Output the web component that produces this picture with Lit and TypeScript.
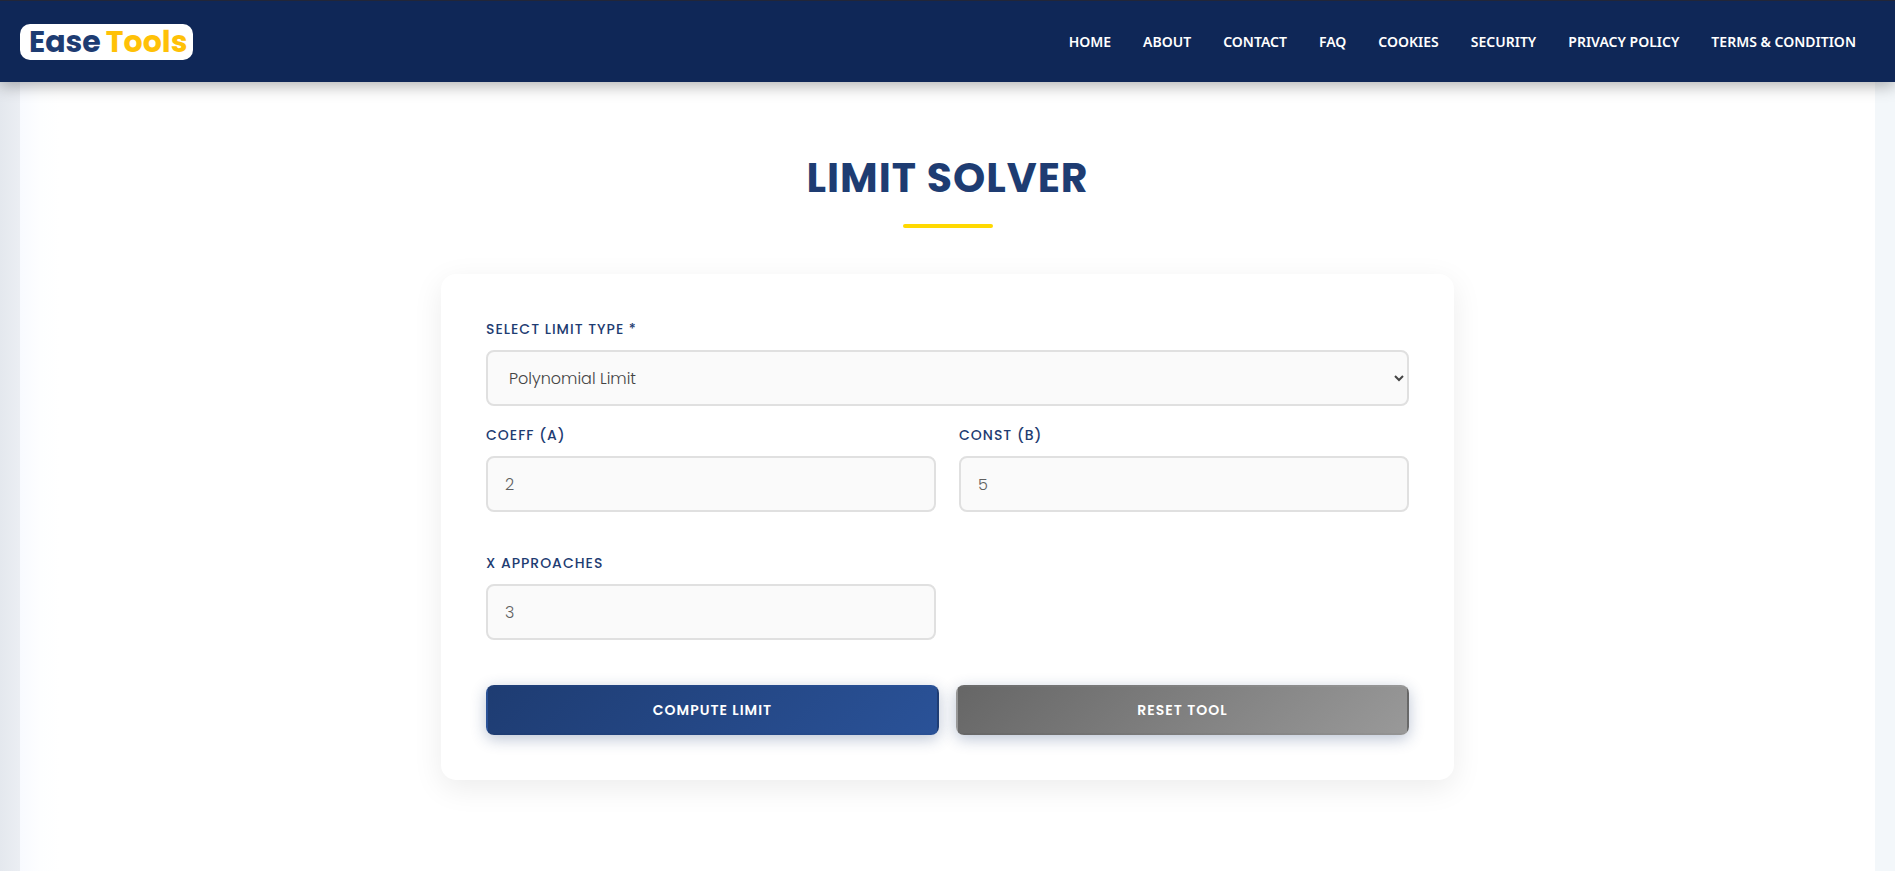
import { LitElement, html, css } from "lit";
import { customElement, state } from "lit/decorators.js";

const NAV_LINKS = [
  "Home",
  "About",
  "Contact",
  "FAQ",
  "Cookies",
  "Security",
  "Privacy Policy",
  "Terms & Condition",
];

@customElement("site-header")
class SiteHeader extends LitElement {
  static styles = css`
    :host {
      display: block;
      position: relative;
      z-index: 1;
    }
    .bar {
      display: flex;
      align-items: center;
      justify-content: space-between;
      box-sizing: border-box;
      min-height: 82px;
      padding: 1px 39px 0 20px;
      background: #0f2757;
      box-shadow: inset 0 1px #222638, 0 4px 15px rgba(0, 0, 0, 0.3);
    }
    .logo {
      display: flex;
      align-items: center;
      gap: 5px;
      padding: 0 6px 0 9px;
      border-radius: 10px;
      background: #fff;
      color: #1e3c72;
      font: 700 30px/36px Poppins, Inter, sans-serif;
      text-decoration: none;
    }
    .accent {
      color: #ffc107;
    }
    .links {
      display: flex;
      gap: 32px;
    }
    .link {
      color: #fff;
      font: 600 14px/24px "Segoe UI", "Noto Sans", sans-serif;
      text-decoration: none;
      text-transform: uppercase;
      white-space: nowrap;
    }
  `;

  render() {
    return html`
      <header class="bar">
        <a class="logo" href="#"><span>Ease</span><span class="accent">Tools</span></a>
        <nav class="links">
          ${NAV_LINKS.map((name) => html`<a class="link" href="#">${name}</a>`)}
        </nav>
      </header>
    `;
  }
}

@customElement("limit-form")
class LimitForm extends LitElement {
  @state() private kind = "polynomial";

  static styles = css`
    :host {
      display: block;
      font-family: Poppins, Inter, sans-serif;
    }
    .card {
      display: flex;
      flex-direction: column;
      padding: 45px;
      border-radius: 15px;
      background: #fff;
      box-shadow: 0 8px 30px rgba(0, 0, 0, 0.08);
    }
    .field {
      display: flex;
      flex-direction: column;
      gap: 10px;
      min-width: 0;
    }
    .label {
      color: #1e3c72;
      font-size: 14px;
      font-weight: 500;
      line-height: 21px;
      letter-spacing: 1px;
      text-transform: uppercase;
    }
    .control {
      box-sizing: border-box;
      width: 100%;
      height: 56px;
      padding: 0 17px;
      border: 2px solid #e0e0e0;
      border-radius: 8px;
      background: #fafafa;
      color: #444;
      font: 300 16px/24px Poppins, Inter, sans-serif;
    }
    .control::placeholder {
      color: #606060;
    }
    .grid {
      display: grid;
      grid-template-columns: 1fr 1fr;
      gap: 41px 23px;
      margin-top: 19px;
    }
    .actions {
      display: grid;
      grid-template-columns: 1fr 1fr;
      gap: 17px;
      margin-top: 45px;
    }
    .button {
      height: 50px;
      border: 2px solid transparent;
      border-radius: 8px;
      background: linear-gradient(135deg, #1e3c72, #2a5298);
      box-shadow: 0 4px 15px rgba(30, 60, 114, 0.3);
      color: #fff;
      font: 600 14px/20px Poppins, Inter, sans-serif;
      letter-spacing: 1px;
      text-transform: uppercase;
      cursor: pointer;
    }
    .muted {
      background: linear-gradient(135deg, #666, #999);
    }
  `;

  render() {
    return html`
      <form class="card" @submit=${(e: Event) => e.preventDefault()}>
        <div class="field">
          <label class="label" for="kind">Select Limit Type *</label>
          <select
            class="control"
            id="kind"
            .value=${this.kind}
            @change=${(e: Event) => (this.kind = (e.target as HTMLSelectElement).value)}
          >
            <option value="polynomial">Polynomial Limit</option>
          </select>
        </div>
        <div class="grid">
          <div class="field">
            <label class="label" for="coeff">Coeff (a)</label>
            <input class="control" id="coeff" type="number" placeholder="2" />
          </div>
          <div class="field">
            <label class="label" for="const">Const (b)</label>
            <input class="control" id="const" type="number" placeholder="5" />
          </div>
          <div class="field">
            <label class="label" for="approach">x approaches</label>
            <input class="control" id="approach" type="number" placeholder="3" />
          </div>
        </div>
        <div class="actions">
          <button class="button" type="submit">Compute Limit</button>
          <button class="button muted" type="reset">Reset Tool</button>
        </div>
      </form>
    `;
  }
}

@customElement("app-root")
class AppRoot extends LitElement {
  static styles = css`
    :host {
      display: flex;
      flex-direction: column;
      min-height: 100vh;
      background: linear-gradient(90deg, #e4e8ee, #ebeef3 20px, #f3f7fa 50%);
    }
    .page {
      flex: 1;
      display: flex;
      flex-direction: column;
      align-items: center;
      margin: 0 20px;
      padding: 67px 20px 91px;
      background: linear-gradient(90deg, #f8faff, #fdfeff 20px, #fff 40px);
    }
    .title {
      margin: 0;
      color: #1e3c72;
      font: 700 41px/58px Poppins, Inter, sans-serif;
      letter-spacing: 1px;
      text-align: center;
      text-transform: uppercase;
    }
    .rule {
      width: 90px;
      height: 4px;
      margin: 17px 0 46px;
      border-radius: 2px;
      background: #ffd900;
    }
    .form {
      width: 100%;
      max-width: 1013px;
    }
  `;

  render() {
    return html`
      <site-header></site-header>
      <main class="page">
        <h1 class="title">Limit Solver</h1>
        <div class="rule"></div>
        <limit-form class="form"></limit-form>
      </main>
    `;
  }
}
